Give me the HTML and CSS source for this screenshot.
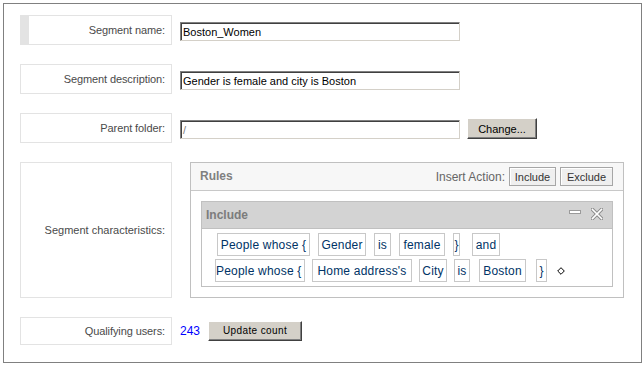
FILE: index.html
```html
<!DOCTYPE html>
<html>
<head>
<meta charset="utf-8">
<link rel="stylesheet" href="styles.css">
</head>
<body>
<div class="frame">
  <div class="row">
    <div class="label mark">Segment name:</div>
    <div class="field">
      <div class="textbox">Boston_Women</div>
    </div>
  </div>
  <div class="row">
    <div class="label">Segment description:</div>
    <div class="field">
      <div class="textbox">Gender is female and city is Boston</div>
    </div>
  </div>
  <div class="row">
    <div class="label">Parent folder:</div>
    <div class="field">
      <div class="textbox dim">/</div>
      <div class="btn change">Change...</div>
    </div>
  </div>
  <div class="row">
    <div class="label tall">Segment characteristics:</div>
    <div class="field flat">
      <div class="rules">
        <div class="rules-head">
          <span class="rules-title">Rules</span>
          <span class="insert">Insert Action:</span>
          <span class="mini">Include</span>
          <span class="mini wide">Exclude</span>
        </div>
        <div class="rules-body">
          <div class="inc">
            <div class="inc-head">
              <span class="inc-title">Include</span>
              <svg class="ico-min" width="12" height="4" viewBox="0 0 12 4"><rect x="0.5" y="0.5" width="11" height="3" fill="#fff" stroke="#9a9a9a"/></svg>
              <svg class="ico-x" width="12" height="12" viewBox="0 0 12 12"><path d="M1.5 1.5 L10.5 10.5 M10.5 1.5 L1.5 10.5" stroke="#8c8c8c" stroke-width="3.6" stroke-linecap="square"/><path d="M1.5 1.5 L10.5 10.5 M10.5 1.5 L1.5 10.5" stroke="#fff" stroke-width="1.6" stroke-linecap="square"/></svg>
            </div>
            <div class="inc-body">
              <div class="tokrow r1">
                <span class="tok w93">People whose {</span>
                <span class="tok w48">Gender</span>
                <span class="tok w17">is</span>
                <span class="tok w46">female</span>
                <span class="tok w7">}</span>
                <span class="tok w28 and">and</span>
              </div>
              <div class="tokrow r2">
                <span class="tok w90 nolead">People whose {</span>
                <span class="tok w100">Home address's</span>
                <span class="tok w28">City</span>
                <span class="tok w16">is</span>
                <span class="tok w47 boston">Boston</span>
                <span class="tok w11 brace2">}</span>
                <svg class="diamond" width="8" height="8" viewBox="0 0 8 8"><path d="M4 0.7 L7.3 4 L4 7.3 L0.7 4 Z" fill="#fff" stroke="#000" stroke-width="1"/></svg>
              </div>
            </div>
          </div>
        </div>
      </div>
    </div>
  </div>
  <div class="row">
    <div class="label short">Qualifying users:</div>
    <div class="field mid">
      <span class="num">243</span>
      <div class="btn update">Update count</div>
    </div>
  </div>
</div>
</body>
</html>
```
FILE: styles.css
```css
* { box-sizing: border-box; }
body {
  margin: 0;
  background: #fff;
  font-family: "Liberation Sans", Arial, sans-serif;
  font-size: 11px;
}
.frame {
  margin: 3px 0 0 3px;
  width: 639px;
  height: 360px;
  border: 1px solid #808080;
  padding: 11px 0 0 16px;
  display: flex;
  flex-direction: column;
  gap: 19px;
}
.row { display: flex; gap: 8px; }
.label {
  width: 152px;
  height: 30px;
  border: 1px solid #e3e3e3;
  display: flex;
  align-items: center;
  justify-content: flex-end;
  padding-right: 6px;
  color: #4a4a4a;
  font-size: 11px;
  letter-spacing: -0.1px;
  flex: none;
}
.label.mark { border-left: 9px solid #e3e3e3; }
.label.tall { height: 136px; letter-spacing: 0; }
.label.short { height: 28px; }
.field { display: flex; align-items: flex-start; padding-top: 7px; }
.field.flat { padding-top: 0; }
.field.mid { padding-top: 0; align-items: center; }
.textbox {
  width: 280px;
  height: 19px;
  border: 1px solid;
  border-color: #808080 #d4d0c8 #d4d0c8 #808080;
  box-shadow: inset 1px 1px 0 #404040;
  padding: 1px 0 0 2px;
  display: flex;
  align-items: center;
  color: #000;
  font-size: 11px;
}
.textbox.dim { color: #808080; }
.btn {
  background: #d4d0c8;
  border: 1px solid;
  border-color: #fff #404040 #404040 #fff;
  box-shadow: inset -1px -1px 0 #808080;
  display: flex;
  align-items: center;
  justify-content: center;
  color: #000;
}
.btn.change {
  width: 70px;
  height: 21px;
  margin-left: 7px;
  margin-top: -2px;
  font-size: 11px;
}
.btn.update {
  width: 94px;
  height: 20px;
  margin-top: -1px;
  font-size: 10px;
  letter-spacing: 0.4px;
}
.num { color: #0000ff; font-size: 12px; margin-right: 8px; }
.rules {
  margin-left: 10px;
  width: 434px;
  height: 136px;
  border: 1px solid #c0c0c0;
}
.rules-head {
  height: 28px;
  background: #f7f7f7;
  border-bottom: 1px solid #c8c8c8;
  display: flex;
  align-items: center;
  padding: 0 10px 0 9px;
}
.rules-title { font-weight: bold; font-size: 12px; color: #808080; margin-top: -2px; }
.insert { margin-left: auto; margin-right: 1px; color: #666; font-size: 12px; }
.mini {
  height: 19px;
  width: 47px;
  border: 1px solid #a6a6a6;
  background: #efefef;
  box-shadow: inset 1px 1px 0 #fff;
  display: flex;
  align-items: center;
  justify-content: center;
  color: #333;
  font-size: 11px;
  margin-left: 3px;
}
.mini.wide { width: 53px; margin-left: 4px; }
.rules-body { padding: 10px; }
.inc { border: 1px solid #c0c0c0; height: 86px; }
.inc-head {
  height: 27px;
  background: #d3d3d3;
  border-bottom: 1px solid #c0c0c0;
  display: flex;
  align-items: center;
  padding: 0 9px 0 4px;
}
.inc-title { font-weight: bold; font-size: 12px; color: #7c7c7c; }
.ico-min { margin-left: auto; margin-top: -6px; }
.ico-x { margin-left: 10px; margin-top: -2px; }
.inc-body {
  padding-top: 4px;
  display: flex;
  flex-direction: column;
  gap: 3px;
}
.tokrow { display: flex; align-items: center; }
.tokrow.r1 { padding-left: 15px; gap: 8px; }
.tokrow.r2 { padding-left: 13px; gap: 7px; }
.tok {
  height: 23px;
  border: 1px solid #c8c8c8;
  padding: 0;
  display: flex;
  align-items: center;
  justify-content: center;
  color: #003366;
  font-size: 12px;
  letter-spacing: 0.2px;
  white-space: nowrap;
  flex: none;
}
.w7 { width: 7px; }
.w11 { width: 11px; }
.w16 { width: 16px; }
.w17 { width: 17px; }
.w28 { width: 28px; }
.w46 { width: 46px; }
.w47 { width: 47px; }
.w48 { width: 48px; }
.w90 { width: 90px; }
.w93 { width: 93px; }
.w100 { width: 100px; }
.tok.nolead { justify-content: flex-start; }
.tok.brace2 { margin-left: 3px; }
.tok.and { margin-left: 4px; }
.tok.boston { margin-left: 2px; }
.diamond { margin-left: 3px; }
```
